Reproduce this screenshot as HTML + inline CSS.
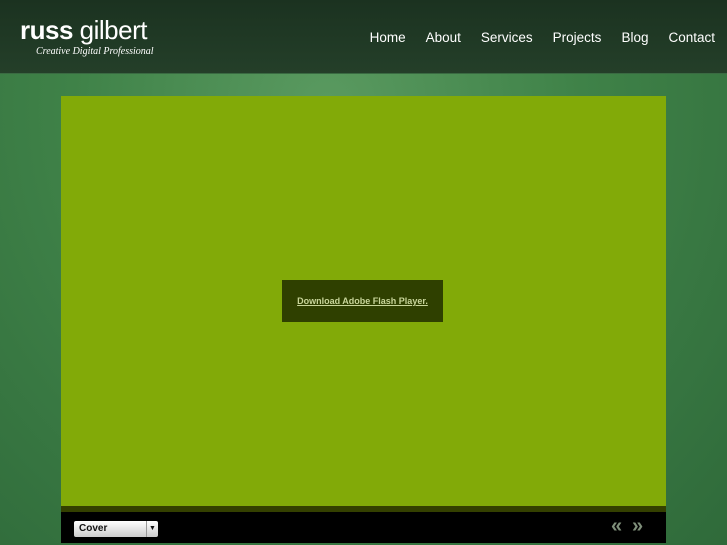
<!DOCTYPE html>
<html><head><style>
body{margin:0;width:727px;height:545px;overflow:hidden;background:radial-gradient(ellipse at 45% 20%,#5a9a60 0%,#3f8248 45%,#2f6a3a 100%);font-family:"Liberation Sans",sans-serif;position:relative}
#hdr{position:absolute;left:0;top:0;width:727px;height:73px;background:linear-gradient(#1b3220,#243f29);border-bottom:1px solid #3a6a42}
.logo{position:absolute;left:20px;top:15px;color:#fff;font-size:26px;letter-spacing:-0.5px}
.logo b{font-weight:bold}
.tag{position:absolute;left:36px;top:46px;color:#fff;font-family:"Liberation Serif",serif;font-style:italic;font-size:10px}
nav{position:absolute;top:30px;right:12px;color:#fff;font-size:13.5px}
nav span{margin-left:20px}
#box{position:absolute;left:61px;top:96px;width:605px;height:410px;background:#82aa08}
#strip{position:absolute;left:61px;top:506px;width:605px;height:6px;background:#344000}
#bar{position:absolute;left:61px;top:512px;width:605px;height:31px;background:#000}
#fl{position:absolute;left:282px;top:280px;width:161px;height:42px;background:#2f4000;color:#c8d59a;font-size:9px;font-weight:bold;text-decoration:underline;text-align:center;line-height:42px}
#sel{position:absolute;left:74px;top:521px;width:84px;height:16px;background:linear-gradient(#fff,#ccc);border-radius:2px;font-size:10px;font-weight:bold;line-height:16px;color:#111}
#sel span{padding-left:5px}
#sel i{position:absolute;right:0;top:0;width:11px;height:16px;border-left:1px solid #999;font-style:normal;font-size:7px;text-align:center}
.ar{position:absolute;top:515px;color:#7f8f7a;font-size:20px;font-weight:bold}
</style></head><body>
<div id="hdr"><div class="logo"><b>russ</b> gilbert</div><div class="tag">Creative Digital Professional</div>
<nav><span>Home</span><span>About</span><span>Services</span><span>Projects</span><span>Blog</span><span>Contact</span></nav></div>
<div id="box"></div><div id="strip"></div><div id="bar"></div>
<div id="fl">Download Adobe Flash Player.</div>
<div id="sel"><span>Cover</span><i>▼</i></div>
<div class="ar" style="left:611px">«</div><div class="ar" style="left:632px">»</div>
</body></html>
